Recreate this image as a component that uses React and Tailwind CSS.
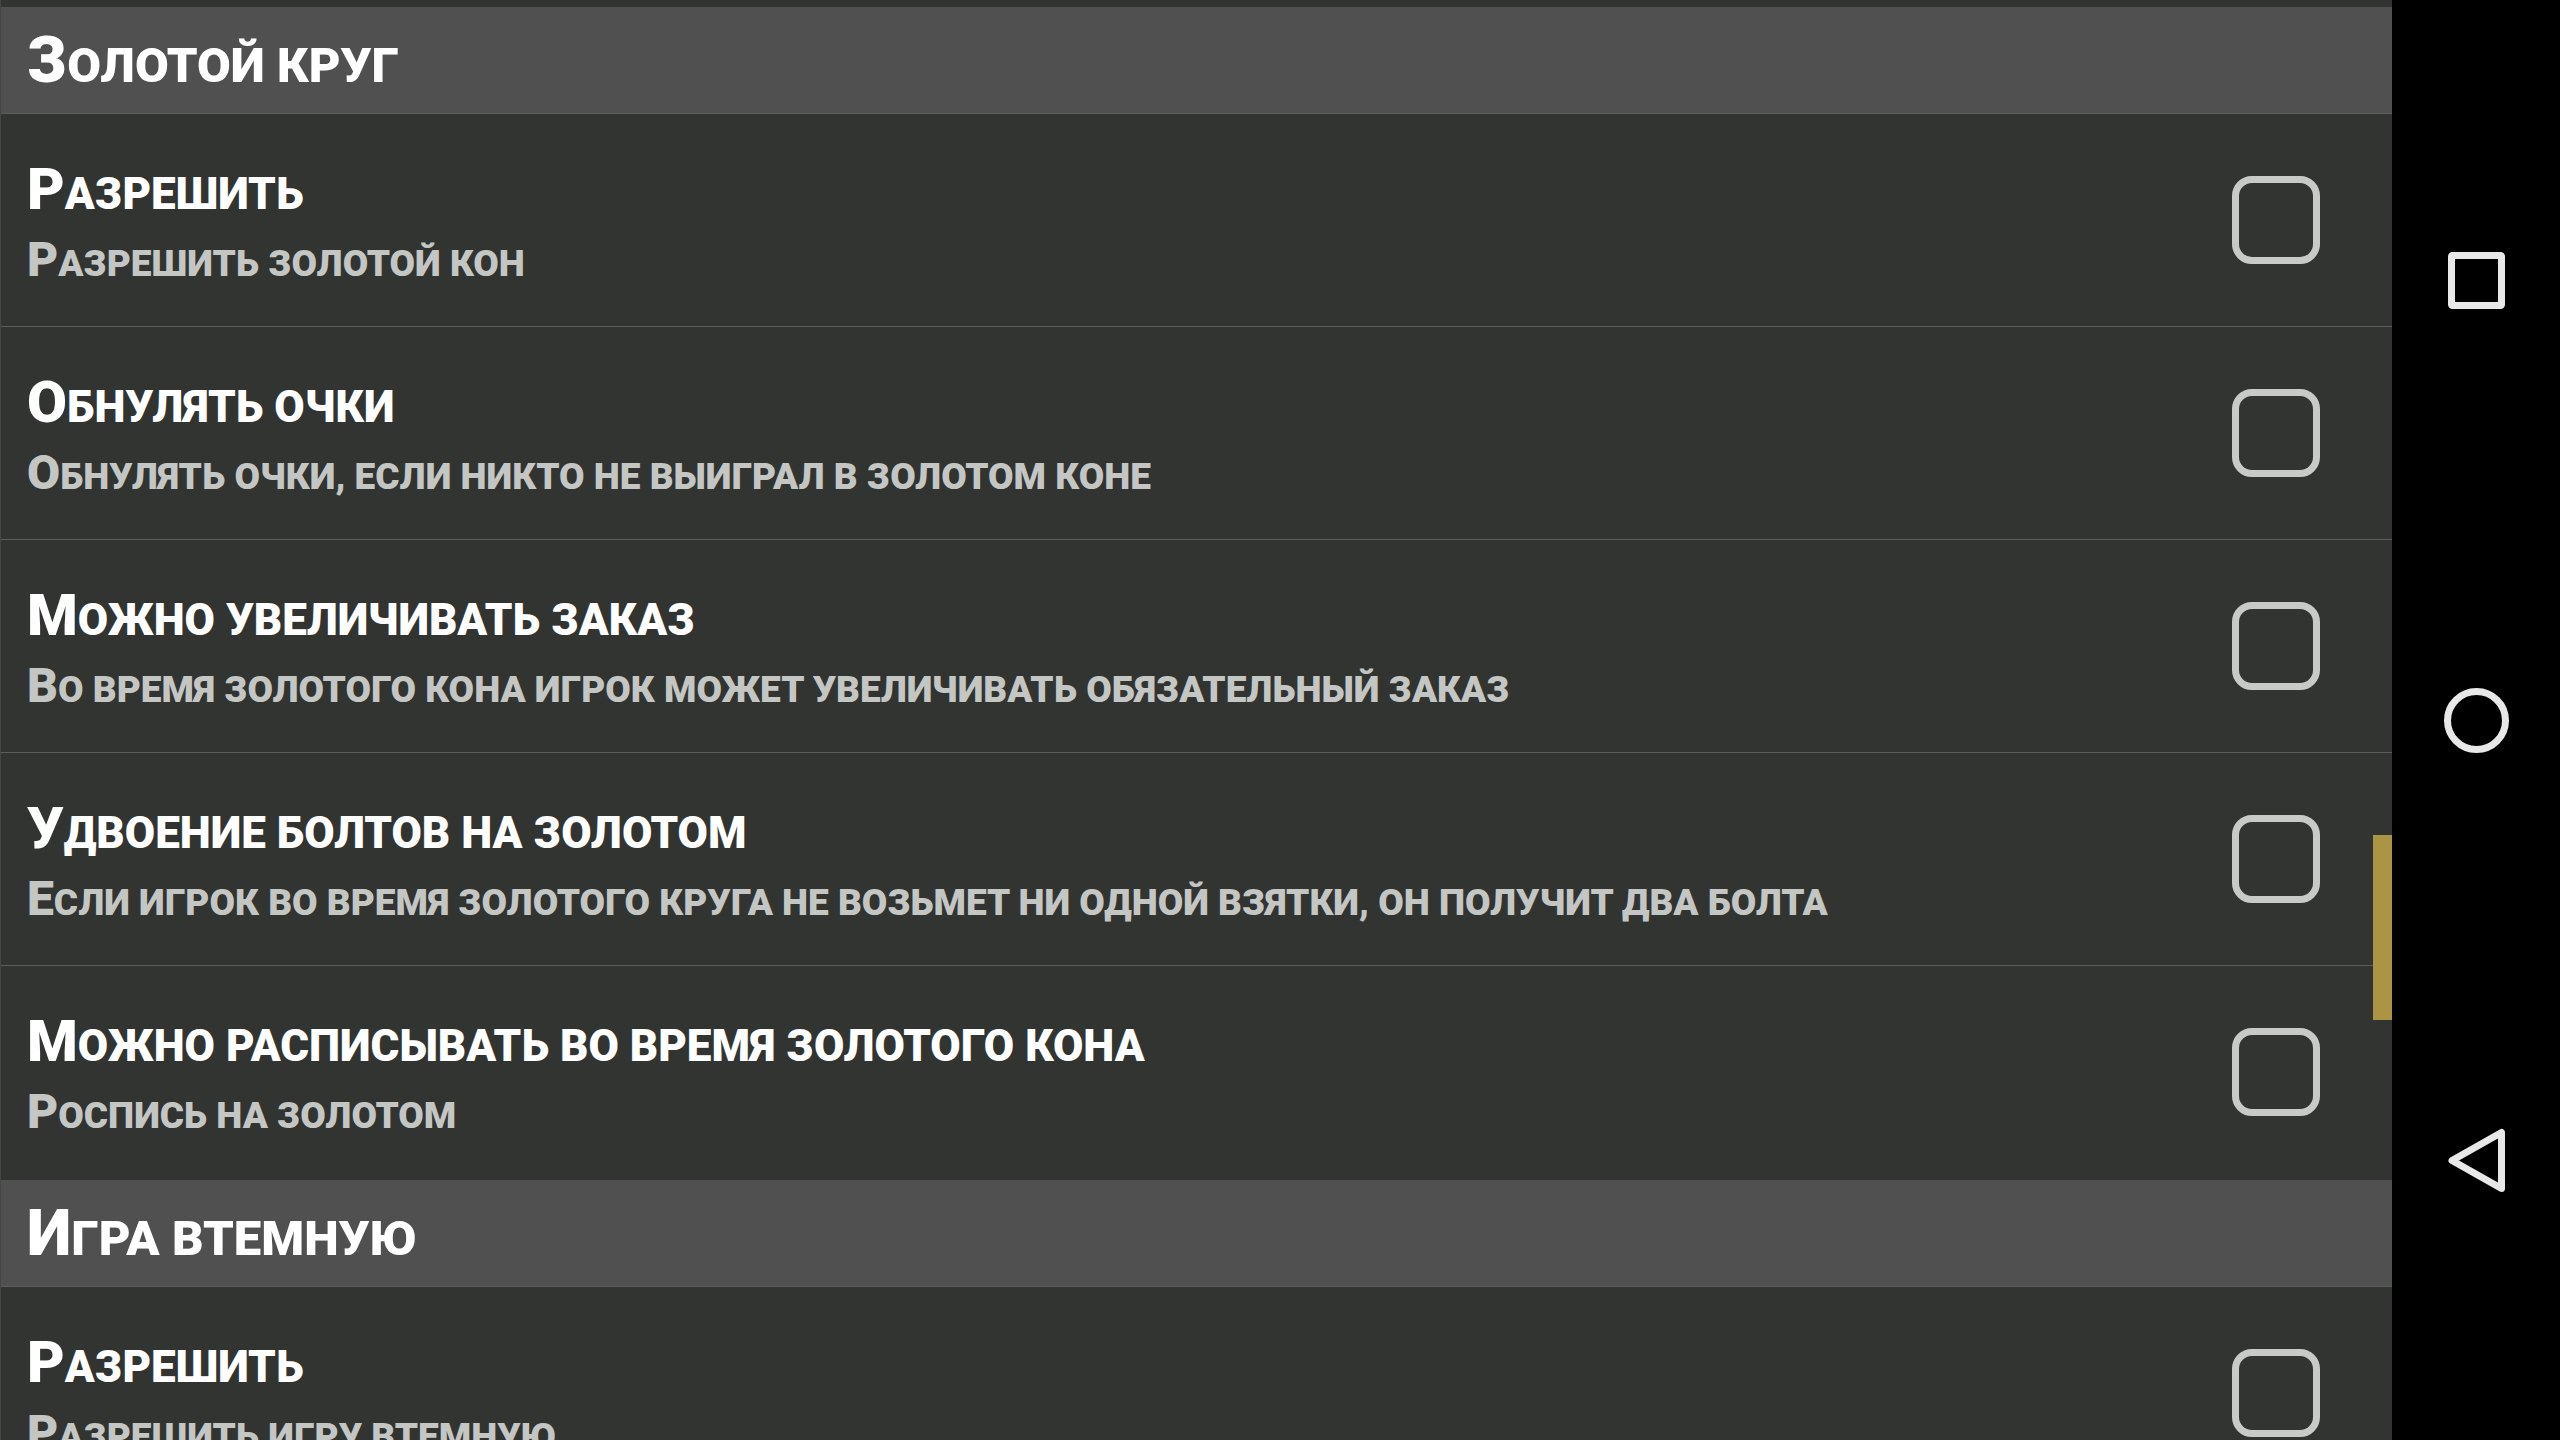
import React, { useState } from 'react';

const sections = [
    {
        id: 'golden',
        title: 'Золотой круг',
        items: [
            { id: 'golden-allow', title: 'Разрешить', summary: 'Разрешить золотой кон' },
            { id: 'golden-reset', title: 'Обнулять очки', summary: 'Обнулять очки, если никто не выиграл в золотом коне' },
            { id: 'golden-raise', title: 'Можно увеличивать заказ', summary: 'Во время золотого кона игрок может увеличивать обязательный заказ' },
            { id: 'golden-bolts', title: 'Удвоение болтов на золотом', summary: 'Если игрок во время золотого круга не возьмет ни одной взятки, он получит два болта' },
            { id: 'golden-split', title: 'Можно расписывать во время золотого кона', summary: 'Роспись на золотом' }
        ]
    },
    {
        id: 'blind',
        title: 'Игра втемную',
        items: [
            { id: 'blind-allow', title: 'Разрешить', summary: 'Разрешить игру втемную' }
        ]
    }
];

const SettingRow = ({ item, checked, onToggle }) => {
    return (
        <li className="border-b border-[#5c5e5c] last:border-transparent">
            <label htmlFor={item.id} className="flex items-center justify-between h-[212px] pl-[26px] pr-[72px] cursor-pointer">
                <span className="block pt-3">
                    <span className="block uppercase text-[44px] leading-[66px] first-letter:text-[58px] text-white">{item.title}</span>
                    <span className="block uppercase text-[37px] leading-[66px] first-letter:text-[48px] text-[#c4c6c4]">{item.summary}</span>
                </span>
                <input
                    id={item.id}
                    type="checkbox"
                    checked={checked}
                    onChange={() => onToggle(item.id)}
                    className="appearance-none shrink-0 size-[88px] rounded-[20px] border-[7px] border-[#c8cac8] checked:bg-[#ab9545]"
                />
            </label>
        </li>
    );
};

const NavButton = ({ label, children }) => {
    return (
        <button type="button" aria-label={label} className="flex-1 flex items-center justify-center">
            <svg viewBox="0 0 66 66" className="size-[66px]" fill="none" stroke="#e8e8e8" strokeWidth="7" strokeLinejoin="round">
                {children}
            </svg>
        </button>
    );
};

const App = () => {
    const [values, setValues] = useState({});

    const toggle = (id) => {
        setValues((prev) => ({ ...prev, [id]: !prev[id] }));
    };

    return (
        <div className="flex h-screen overflow-hidden bg-black font-['Roboto',sans-serif] font-black">
            {/* Settings list */}
            <main className="relative flex-1 flex flex-col gap-px overflow-hidden bg-[#323432] border-l border-[#444644] pt-[7px]">
                {sections.map((section) => (
                    <section key={section.id} className="shrink-0">
                        <h2 className="h-[107px] pl-[26px] pt-[18px] bg-[#505050] border-b border-[#5c5e5c] uppercase text-[49px] leading-[72px] first-letter:text-[64px] text-white">
                            {section.title}
                        </h2>
                        <ul>
                            {section.items.map((item) => (
                                <SettingRow key={item.id} item={item} checked={!!values[item.id]} onToggle={toggle} />
                            ))}
                        </ul>
                    </section>
                ))}

                {/* Scroll thumb */}
                <div className="absolute right-0 top-[58%] w-[19px] h-[185px] bg-[#ab9545]"></div>
            </main>

            {/* System navigation */}
            <nav className="flex flex-col w-[168px] shrink-0 py-[60px] bg-black">
                <NavButton label="Обзор">
                    <rect x="8.5" y="8.5" width="50" height="50" rx="1" />
                </NavButton>
                <NavButton label="Домой">
                    <circle cx="33.5" cy="33.5" r="29" />
                </NavButton>
                <NavButton label="Назад">
                    <path d="M58.5 5.500 V61.500 L9 33.500 Z" />
                </NavButton>
            </nav>
        </div>
    );
};

export default App;
